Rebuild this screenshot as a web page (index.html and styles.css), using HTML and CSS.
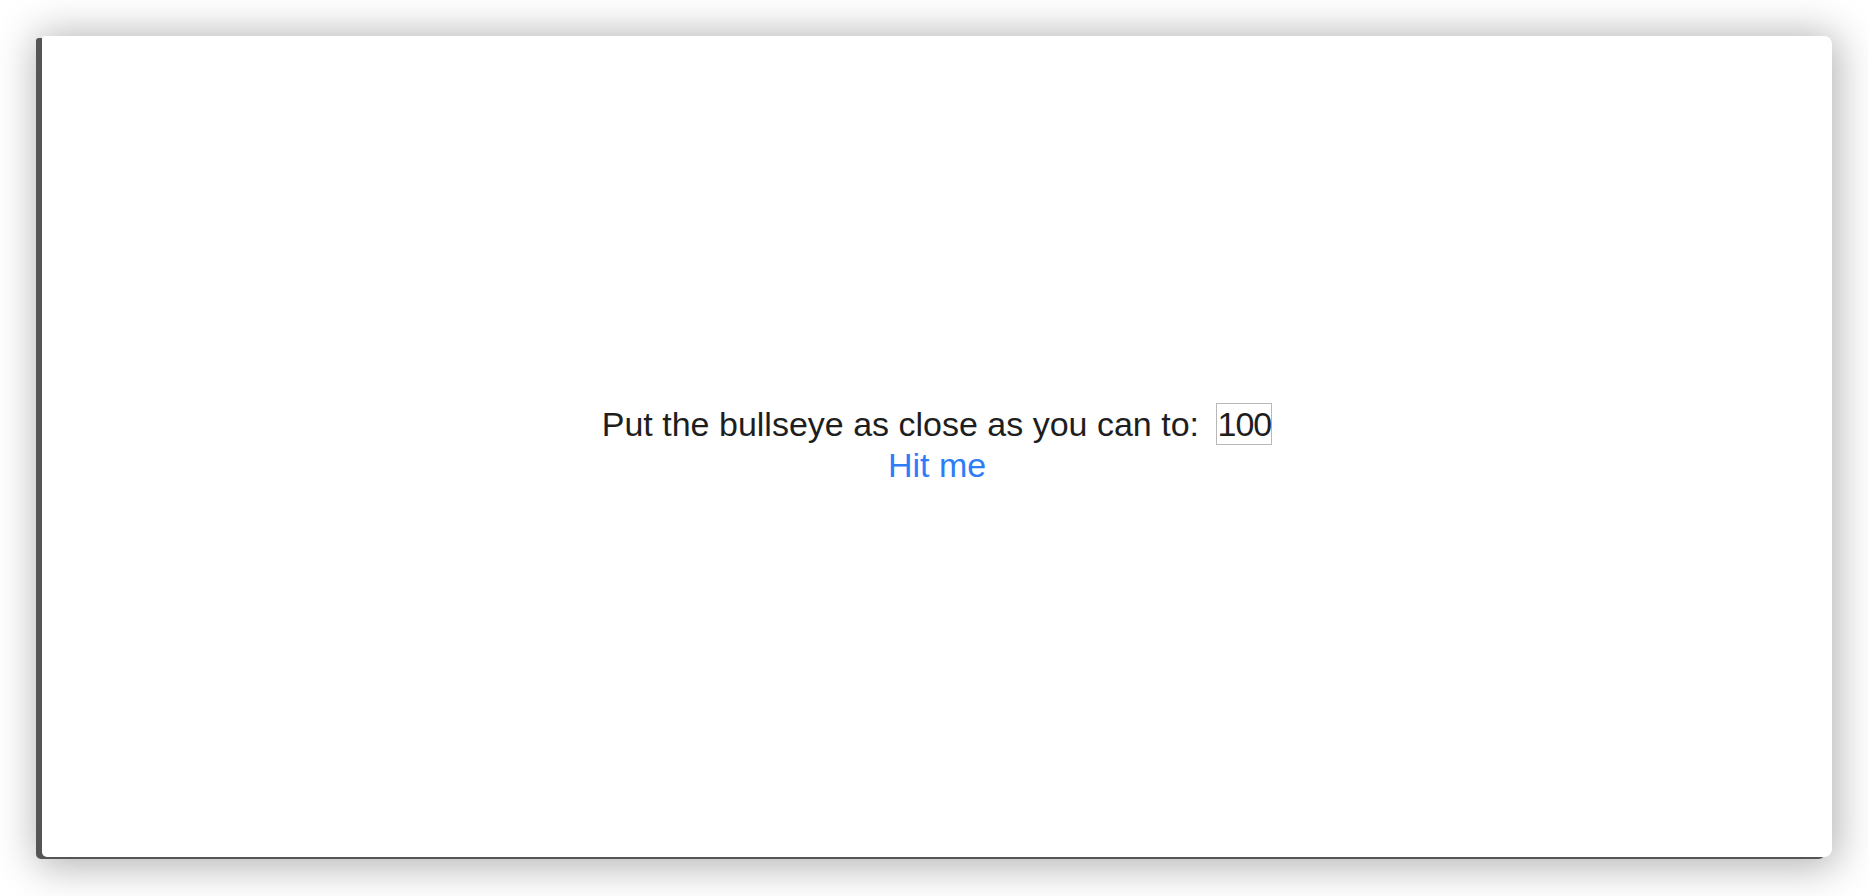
FILE: index.html
```html
<!DOCTYPE html>
<html lang="en">
<head>
<meta charset="utf-8">
<title>Bullseye</title>
<link rel="stylesheet" href="styles.css">
</head>
<body>
<div class="stage">
  <main class="window">
    <div class="content">
      <div class="prompt">Put the bullseye as close as you can to: <span class="target">100</span></div>
      <div class="action">Hit me</div>
    </div>
  </main>
</div>
</body>
</html>
```

FILE: styles.css
```css
html, body {
  margin: 0;
  padding: 0;
  background: #ffffff;
}

.stage {
  box-sizing: border-box;
  width: 1868px;
  height: 896px;
  padding: 36px 36px 39px 42px;
  display: flex;
}

.window {
  flex: 1;
  background: #ffffff;
  border-radius: 3px 8px 8px 5px;
  box-shadow: -6px 2px 0 #555555, 0 4px 40px 6px rgba(0, 0, 0, 0.30);
  display: flex;
  align-items: center;
  justify-content: center;
}

.content {
  display: flex;
  flex-direction: column;
  align-items: center;
  padding-bottom: 4px;
  font-family: "Liberation Sans", Arial, sans-serif;
  font-size: 34px;
  line-height: 41px;
  color: #1e1e1e;
}

.target {
  margin-left: 8px;
  padding: 1px 0;
  border: 1px solid #b8b8b8;
  letter-spacing: -1px;
}

.action {
  color: #2e7df7;
}
```
